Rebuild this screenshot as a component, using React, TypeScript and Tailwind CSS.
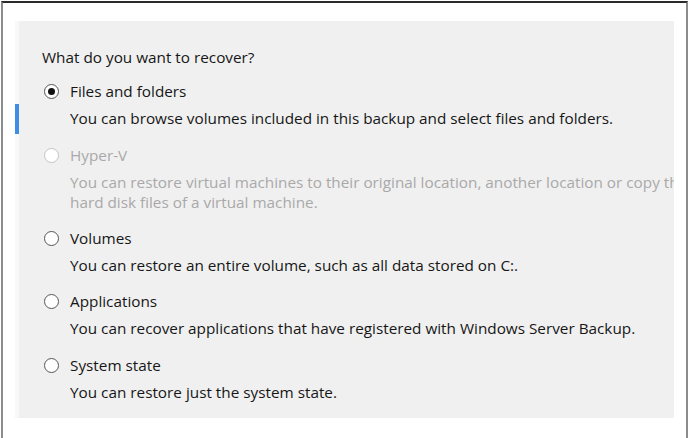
const FONT = { fontFamily: '"Open Sans", "Noto Sans", sans-serif' };

type Option = {
  label: string;
  lines: string[];
  checked?: boolean;
  disabled?: boolean;
  extra?: boolean;
};

const OPTIONS: Option[] = [
  {
    label: "Files and folders",
    lines: ["You can browse volumes included in this backup and select files and folders."],
    checked: true,
  },
  {
    label: "Hyper-V",
    lines: [
      "You can restore virtual machines to their original location, another location or copy the",
      "hard disk files of a virtual machine.",
    ],
    disabled: true,
    extra: true,
  },
  {
    label: "Volumes",
    lines: ["You can restore an entire volume, such as all data stored on C:."],
  },
  {
    label: "Applications",
    lines: ["You can recover applications that have registered with Windows Server Backup."],
  },
  {
    label: "System state",
    lines: ["You can restore just the system state."],
    extra: true,
  },
];

function Radio({ checked, disabled }: { checked?: boolean; disabled?: boolean }) {
  return (
    <span
      className={
        "flex h-[15px] w-[15px] shrink-0 items-center justify-center rounded-full border bg-white " +
        (disabled ? "border-[#c4c4c4]" : "border-[#555]")
      }
    >
      {checked && <span className="h-[7px] w-[7px] rounded-full bg-[#111]" />}
    </span>
  );
}

function OptionRow({ opt }: { opt: Option }) {
  const textColor = opt.disabled ? "text-[#a9a9a9]" : "text-[#161616]";
  return (
    <div className={textColor + (opt.extra ? " mt-[1px]" : "")}>
      <div className="flex h-[20px] items-center">
        <span className="ml-[2px] mr-[11px]">
          <Radio checked={opt.checked} disabled={opt.disabled} />
        </span>
        <span className="whitespace-nowrap leading-[20px]">{opt.label}</span>
      </div>
      <div className="mt-[7px] pl-[28px]">
        {opt.lines.map((l) => (
          <div key={l} className="whitespace-nowrap leading-[20px]">
            {l}
          </div>
        ))}
      </div>
    </div>
  );
}

export default function App() {
  return (
    <div className="h-[438px] w-[689px] overflow-hidden bg-white pl-[1px] pt-[1px]" style={FONT}>
      <div className="h-[437px] w-[687px] border-x-2 border-t-2 border-x-[#8c8c8c] border-t-[#2a2a2a] pl-[12px] pt-[18px]">
        <div className="flex h-[397px] w-[659px] overflow-hidden bg-[#f0f0f0] text-[15.3px]">
          <div className="w-[4px] shrink-0 bg-[#f8f8f8] pt-[83px]">
            <div className="h-[30px] w-[4px] bg-[#3d8ee4]" />
          </div>
          <div className="flex flex-col gap-[16px] pl-[23px] pt-[26px]">
            <div className="mb-[-2px] leading-[20px] text-[#161616]">What do you want to recover?</div>
            {OPTIONS.map((o) => (
              <OptionRow key={o.label} opt={o} />
            ))}
          </div>
        </div>
      </div>
    </div>
  );
}
